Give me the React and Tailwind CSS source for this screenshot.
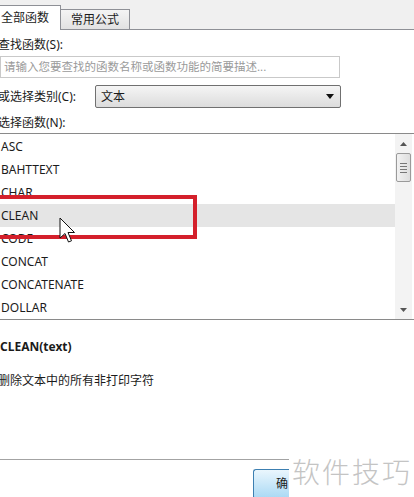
import React from "react";

const FUNCS = ["ASC", "BAHTTEXT", "CHAR", "CLEAN", "CODE", "CONCAT", "CONCATENATE", "DOLLAR"];

const Cursor = () => (
	<svg width="20" height="28" viewBox="0 0 20 28" className="absolute left-[59px] top-[217px]">
		<path d="M1 1 L1 21 L6 16.5 L9.5 25 L12.5 23.8 L9 15.5 L15.5 15.5 Z" fill="#fff" stroke="#111" strokeWidth="1" strokeLinejoin="round" />
	</svg>
);

const ScrollBar = () => (
	<div className="flex w-[17px] shrink-0 flex-col items-center bg-[#f3f3f3]">
		<div className="flex h-[19px] w-full items-center justify-center">
			<svg width="7" height="4" viewBox="0 0 7 4"><path d="M0 4 L3.5 0 L7 4 Z" fill="#555" /></svg>
		</div>
		<div className="flex h-[29px] w-[15px] flex-col items-center justify-center gap-[2px] rounded-[2px] border border-[#9a9a9a] bg-gradient-to-r from-[#f2f2f2] to-[#dedede]">
			<div className="h-px w-[7px] bg-[#777]" />
			<div className="h-px w-[7px] bg-[#777]" />
			<div className="h-px w-[7px] bg-[#777]" />
			<div className="h-px w-[7px] bg-[#777]" />
		</div>
		<div className="flex-1" />
		<div className="flex h-[19px] w-full items-center justify-center">
			<svg width="7" height="4" viewBox="0 0 7 4"><path d="M0 0 L7 0 L3.5 4 Z" fill="#555" /></svg>
		</div>
	</div>
);

export default function App() {
	return (
		<div
			className="relative h-[497px] w-[414px] overflow-hidden bg-white text-[12px] text-[#1b1b1b]"
			style={{ fontFamily: '"Noto Sans", "Noto Sans CJK SC", sans-serif' }}
		>
			{/* tabs */}
			<div className="flex h-[30px] items-end border-b border-[#8e9096] bg-[#f0f0f0]">
				<div className="-mb-px flex h-[25px] w-[61px] items-center border-r border-t border-[#8e9096] bg-white pl-[1px] leading-none">
					全部函数
				</div>
				<div className="flex h-[20px] w-[69px] items-center justify-center border-r border-t border-[#8e9096] bg-gradient-to-b from-[#f4f4f4] to-[#e2e2e2] pt-[1px] leading-none">
					常用公式
				</div>
			</div>

			<div className="-ml-[2px] mt-[7px] leading-[16px]">查找函数(S):</div>
			<div className="mt-[3px] flex h-[22px] w-[340px] items-center border border-[#c9c9c9] pl-[3px] text-[11.5px] text-[#9a9a9a]">
				请输入您要查找的函数名称或函数功能的简要描述...
			</div>

			<div className="mt-[7px] flex h-[23px] items-center">
				<div className="-ml-[2px] w-[97px]">或选择类别(C):</div>
				<div className="flex h-[23px] w-[246px] items-center justify-between rounded-[2px] border border-[#707070] bg-gradient-to-b from-[#f5f5f5] to-[#dcdcdc] px-[5px]">
					<span>文本</span>
					<svg width="8" height="5" viewBox="0 0 8 5" className="mr-[1px]"><path d="M0 0 L8 0 L4 5 Z" fill="#111" /></svg>
				</div>
			</div>

			<div className="-ml-[2px] mt-[7px] leading-[16px]">选择函数(N):</div>

			{/* function list */}
			<div className="mt-[2px] flex h-[187px] border-y border-[#8a8a8a]">
				<div className="flex-1 pt-[1px]">
					{FUNCS.map((f) => (
						<div
							key={f}
							className={`flex h-[23px] items-center pl-[1px] ${f === "CLEAN" ? "bg-[#e5e5e5]" : ""}`}
						>
							{f}
						</div>
					))}
				</div>
				<ScrollBar />
				<div className="w-[2px]" />
			</div>

			{/* description */}
			<div className="flex h-[140px] flex-col border-b border-[#a3a3a3]">
				<div className="mt-[19px] font-bold leading-[16px]">CLEAN(text)</div>
				<div className="-ml-[2px] mt-[18px] leading-[16px]">删除文本中的所有非打印字符</div>
			</div>

			<div className="mt-[9px] flex pl-[253px]">
				<div className="flex h-[30px] w-[36px] items-center justify-end rounded-l-[3px] border border-r-0 border-[#3c7fb1] bg-gradient-to-b from-[#eaf6fd] to-[#a9d9f4] pr-[1px] text-[12px]">
					确
				</div>
			</div>

			{/* red highlight */}
			<div className="absolute left-[-6px] top-[195px] h-[44px] w-[203px] border-4 border-[#d4202b]" />
			<Cursor />

			{/* watermark */}
			<div className="absolute left-[289px] top-[446px] flex h-[51px] w-[125px] items-center bg-white pl-[3px] text-[28px] font-light tracking-[2px] text-[#c4c4c4]">
				软件技巧
			</div>
		</div>
	);
}
